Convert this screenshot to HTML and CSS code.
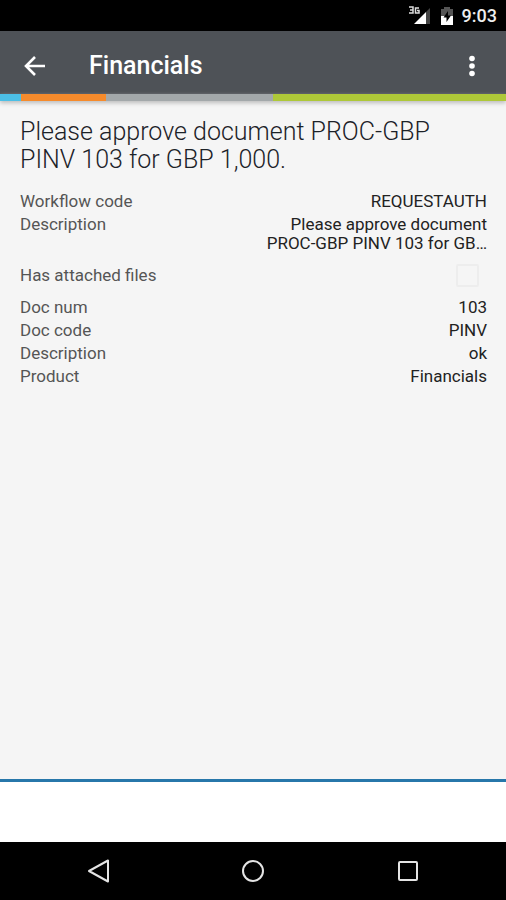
FILE: index.html
```html
<!DOCTYPE html>
<html lang="en">
<head>
<meta charset="utf-8">
<meta name="viewport" content="width=device-width, initial-scale=1">
<title>Financials</title>
<link rel="stylesheet" href="styles.css">
</head>
<body>
<div class="status">
<svg class="signal" width="24" height="20" viewBox="0 0 24 20" aria-hidden="true">
<path d="M22 2v16H18V6z" fill="#444"/>
<path d="M18 6v12H6z" fill="#fff"/>
<path d="M1 1h4v6H1M2 4h3M11 2H7.500v5H11V4.500H9" fill="none" stroke="#ddd" stroke-width="1.500"/>
</svg>
<svg class="battery" width="12" height="20" viewBox="0 0 12 20" aria-hidden="true">
<path d="M0 3h3V1h6v2h3v7H0z" fill="#555"/>
<path d="M0 10h12v9H0z" fill="#fff"/>
<path d="M7 5L2.500 11.500H5.500V16L10 9.500H7z" fill="#000"/>
</svg>
<span class="clock">9:03</span>
</div>

<header class="appbar">
<button type="button" class="back" aria-label="Back">
<svg width="22" height="22" viewBox="0 0 22 22">
<path d="M21 11H3M11 2L2 11l9 9" fill="none" stroke="#fff" stroke-width="2.600"/>
</svg>
</button>
<h1>Financials</h1>
<button type="button" class="more" aria-label="More options">
<svg width="6" height="22" viewBox="0 0 6 22" fill="#fff">
<circle cx="3" cy="3.500" r="2.800"/>
<circle cx="3" cy="11" r="2.800"/>
<circle cx="3" cy="18.500" r="2.800"/>
</svg>
</button>
</header>
<div class="stripe">
<span class="blue"></span>
<span class="orange"></span>
<span class="grey"></span>
<span class="green"></span>
</div>

<main>
<h2>Please approve document PROC-GBP PINV 103 for GBP 1,000.</h2>
<dl>
<div class="row"><dt>Workflow code</dt><dd>REQUESTAUTH</dd></div>
<div class="row"><dt>Description</dt><dd>Please approve document PROC-GBP PINV 103 for GB…</dd></div>
<div class="row check"><dt><label for="attached">Has attached files</label></dt><dd><input type="checkbox" id="attached" disabled></dd></div>
<div class="row"><dt>Doc num</dt><dd>103</dd></div>
<div class="row"><dt>Doc code</dt><dd>PINV</dd></div>
<div class="row"><dt>Description</dt><dd>ok</dd></div>
<div class="row"><dt>Product</dt><dd>Financials</dd></div>
</dl>
</main>

<footer></footer>

<nav>
<button type="button" aria-label="Back">
<svg width="24" height="24" viewBox="0 0 24 24">
<path d="M21 1.500v21L2 12z"/>
</svg>
</button>
<button type="button" aria-label="Home">
<svg width="24" height="24" viewBox="0 0 24 24">
<circle cx="12" cy="12" r="10"/>
</svg>
</button>
<button type="button" aria-label="Recent apps">
<svg width="24" height="24" viewBox="0 0 24 24">
<rect x="3" y="3" width="18" height="18" rx="1"/>
</svg>
</button>
</nav>
</body>
</html>
```

FILE: styles.css
```css
body {
    display: flex;
    flex-direction: column;
    min-height: 100vh;
    margin: 0;
    background: #F5F5F5;
    color: #222;
    font: 17px/19px Roboto, sans-serif;
}
h1, h2, dl, dd {
    margin: 0;
}
button {
    display: flex;
    align-items: center;
    justify-content: center;
    padding: 0;
    border: 0;
    background: none;
}
.status {
    display: flex;
    align-items: center;
    justify-content: flex-end;
    height: 31px;
    padding-right: 9px;
    background: #000;
    color: #EEE;
}
.battery {
    margin: 0 9px;
}
.clock {
    font-size: 18px;
    font-weight: 500;
}
.appbar {
    display: flex;
    align-items: center;
    height: 56px;
    padding: 7px 20px 0 21px;
    background: #4E5257;
}
.appbar h1 {
    flex: 1;
    padding-left: 40px;
    color: #FFF;
    font-size: 25px;
    font-weight: 500;
    line-height: 32px;
}
.back, .more {
    width: 28px;
    height: 40px;
}
.stripe {
    display: flex;
    height: 7px;
    box-shadow: 0 2px 4px #BBB;
}
.blue {
    width: 21px;
    background: #4CBFE6;
}
.orange {
    flex: 85;
    background: #F68B2C;
}
.grey {
    flex: 167;
    background: #A3A8AA;
}
.green {
    flex: 233;
    background: #AEC838;
}
main {
    flex: 1;
    padding: 17px 19px 16px 20px;
}
h2 {
    margin-bottom: 16px;
    color: #1C2228;
    font-size: 25px;
    font-weight: 300;
    line-height: 28px;
}
.row {
    display: flex;
    justify-content: space-between;
    padding: 2px 0;
}
dt {
    color: #555;
}
dd {
    max-width: 50%;
    text-align: right;
}
.check {
    align-items: center;
    padding: 9px 0;
}
.check dd {
    display: flex;
    padding-right: 8px;
}
.check input {
    appearance: none;
    width: 23px;
    height: 23px;
    margin: 0;
    border: 2px solid #EDEDED;
    border-radius: 2px;
}
footer {
    height: 60px;
    border-top: 3px solid #2777AA;
    background: #FFF;
}
nav {
    display: flex;
    height: 58px;
    padding: 0 21px 0 22px;
    background: #000;
}
nav button {
    flex: 1;
}
nav svg {
    fill: none;
    stroke: #E4E4E4;
    stroke-width: 2;
    stroke-linejoin: round;
}
```
